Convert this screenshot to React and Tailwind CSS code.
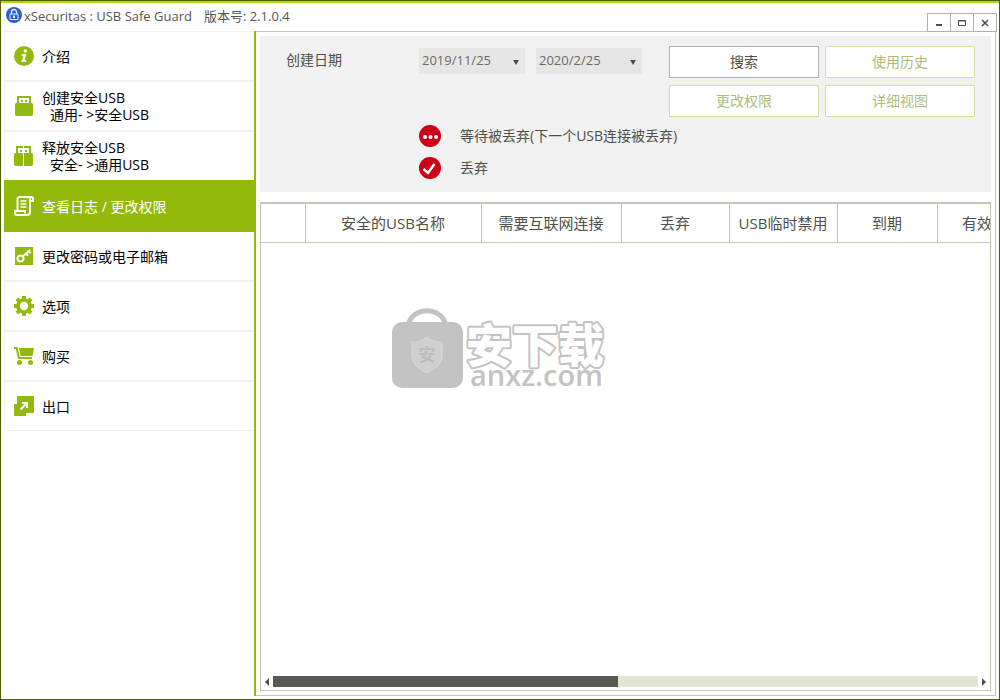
const InfoIcon = () => (
  <svg width="20" height="20" viewBox="0 0 20 20" fill="currentColor">
    <circle cx="10" cy="10" r="10" />
    <circle cx="11.3" cy="5" r="1.7" fill="#fff" />
    <path d="M7.6 8.3h4.6l-1.5 6h1.7l-.3 1.4H7.2l.4-1.4h.7l1.1-4.6H7.3z" fill="#fff" />
  </svg>
);

const UsbIcon = () => (
  <svg width="20" height="20" viewBox="0 0 20 20" fill="currentColor">
    <path d="M3 0h14v9H3z" />
    <path d="M5 2h10v5H5z" fill="#fff" />
    <path d="M7 4h2v2H7zM11 4h2v2h-2z" />
    <path d="M2 7h16l1 1v10a2 2 0 0 1-2 2H3a2 2 0 0 1-2-2V8z" />
  </svg>
);

const ReleaseIcon = () => (
  <svg width="20" height="20" viewBox="0 0 20 20" fill="currentColor">
    <path d="M2 0h15v9H2z" />
    <path d="M4 2h11v5H4zM9 0h1v20H9z" fill="#fff" />
    <path d="M6 4h2v2H6zM11 4h2v2h-2z" />
    <path d="M1 7h8v13H2a2 2 0 0 1-2-2V8zM10 7h8l1 1v10a2 2 0 0 1-2 2h-7z" />
  </svg>
);

const LogIcon = () => (
  <svg width="20" height="20" viewBox="0 0 20 20" fill="none" stroke="currentColor" strokeWidth="2">
    <path d="M3.5 14V3a2 2 0 0 1 2-2H17a2 2 0 0 1 2 2v2h-3.5" />
    <path d="M16 2.5V16a3 3 0 0 1-3 3H3a2 2 0 0 1-2-2v-2h10v2.5" />
    <path d="M6.5 5h6M6.5 8h6M6.5 11h6" strokeWidth="1.5" />
  </svg>
);

const KeyIcon = () => (
  <svg width="20" height="20" viewBox="0 0 20 20">
    <path d="M1 1h18v18H1z" fill="currentColor" />
    <g fill="none" stroke="#fff" strokeWidth="2">
      <circle cx="6.5" cy="12.5" r="3" />
      <path d="M8.6 10.4 16 4M12 7.5l2 2.2M14.5 5l2.2 2.4" />
    </g>
  </svg>
);

const GearIcon = () => (
  <svg width="20" height="20" viewBox="0 0 20 20" fill="none" stroke="currentColor">
    <circle cx="10" cy="10" r="6" strokeWidth="3.6" />
    <path
      d="M10 0v3M10 17v3M0 10h3M17 10h3M2.9 2.9l2.2 2.2M14.9 14.9l2.2 2.2M2.9 17.1l2.2-2.2M14.9 5.1l2.2-2.2"
      strokeWidth="4"
    />
  </svg>
);

const CartIcon = () => (
  <svg width="20" height="20" viewBox="0 0 20 20" fill="currentColor">
    <path d="M0 1h3.5l2.2 10H18v2H4L1.9 3H0z" />
    <path d="M5 2h15l-1.5 8h-12z" />
    <circle cx="5.5" cy="16.5" r="2.5" />
    <circle cx="16.5" cy="16.5" r="2.5" />
  </svg>
);

const ExitIcon = () => (
  <svg width="20" height="20" viewBox="0 0 20 20">
    <path d="M3 0h17v17h-8v3H0V8h3z" fill="currentColor" />
    <path d="M6.5 13.5 12.5 7.5M8 7h5v5" fill="none" stroke="#fff" strokeWidth="2" />
  </svg>
);

const LockLogo = () => (
  <svg width="16" height="16" viewBox="0 0 16 16">
    <circle cx="8" cy="8" r="8" fill="#2a62c4" />
    <path d="M5.5 7V5a2.5 2.5 0 0 1 5 0v2" fill="none" stroke="#dfe9fa" strokeWidth="1.3" />
    <path d="M4 7h8v5.5H4z" fill="#2a62c4" stroke="#dfe9fa" />
    <path d="M7 8.5h2V11H7z" fill="#dfe9fa" />
  </svg>
);

const Watermark = () => (
  <svg width="216" height="84" viewBox="0 0 216 84">
    <path d="M17 18C22-1 50-1 55 18" fill="none" stroke="#c3c3c3" strokeWidth="5" />
    <rect x="1" y="15" width="71" height="66" rx="10" fill="#c3c3c3" />
    <path d="M36 30q8 6 15 5v14q0 10-15 17-15-7-15-17V35q7 1 15-5z" fill="#d0d0ce" stroke="#dadada" />
    <text x="36" y="54" textAnchor="middle" fontSize="17" fontWeight="700" fill="#bdbdbd">
      安
    </text>
    <text
      x="75"
      y="55"
      fontSize="46"
      fontWeight="900"
      fill="#fff"
      stroke="#c3c3c3"
      strokeWidth="4"
      strokeLinejoin="round"
      paintOrder="stroke"
    >
      安下载
    </text>
    <text x="79" y="79" fontSize="29" fontWeight="600" fill="#c3c3c3">
      anxz.com
    </text>
  </svg>
);

const menu = [
  { icon: InfoIcon, title: "介绍" },
  { icon: UsbIcon, title: "创建安全USB", sub: "通用- >安全USB" },
  { icon: ReleaseIcon, title: "释放安全USB", sub: "安全- >通用USB" },
  { icon: LogIcon, title: "查看日志 / 更改权限", active: true },
  { icon: KeyIcon, title: "更改密码或电子邮箱" },
  { icon: GearIcon, title: "选项" },
  { icon: CartIcon, title: "购买" },
  { icon: ExitIcon, title: "出口" },
];

const columns = [
  { name: "", width: "w-11" },
  { name: "安全的USB名称", width: "w-44" },
  { name: "需要互联网连接", width: "w-[140px]" },
  { name: "丢弃", width: "w-[108px]" },
  { name: "USB临时禁用", width: "w-[108px]" },
  { name: "到期", width: "w-[100px]" },
  { name: "有效", width: "w-20" },
];

const WindowButton = ({ label, children }) => (
  <button
    type="button"
    aria-label={label}
    className="flex h-[19px] w-6 items-center justify-center border border-[#b0b0b0] bg-white text-[#4f4f49]"
  >
    <svg width="8" height="8" viewBox="0 0 8 8" fill="none" stroke="currentColor">
      {children}
    </svg>
  </button>
);

const TitleBar = () => (
  <header className="flex h-7 shrink-0 justify-between pl-[5px] pr-0.5">
    <div className="flex items-center gap-0.5 text-[13px] text-[#55554f]">
      <div className="pb-1">
        <LockLogo />
      </div>
      <h1>xSecuritas : USB Safe Guard</h1>
      <span className="ml-2.5">版本号: 2.1.0.4</span>
    </div>
    <div className="relative z-10 mt-[10px] flex -space-x-px">
      <WindowButton label="最小化">
        <path d="M1 6h6" strokeWidth="2" />
      </WindowButton>
      <WindowButton label="最大化">
        <path d="M.5 1.5h7v5h-7zM0 2h8" />
      </WindowButton>
      <WindowButton label="关闭">
        <path d="M1 1l6 6M7 1 1 7" strokeWidth="1.6" />
      </WindowButton>
    </div>
  </header>
);

const MenuItem = ({ icon: Icon, title, sub, active }) => (
  <li
    className={
      active
        ? "-mt-0.5 bg-[#93b90d] text-white"
        : "border-b-2 border-l border-[#f1f1f1] text-black last:border-b"
    }
  >
    <button
      type="button"
      className={`flex w-full items-center gap-2 text-left ${active ? "h-[52px] pl-[10px]" : "h-12 pl-[9px]"}`}
    >
      <span className={active ? "text-white" : "text-[#93b90d]"}>
        <Icon />
      </span>
      <span className="text-sm leading-[17px]">
        {title}
        {sub && <span className="block pl-2">{sub}</span>}
      </span>
    </button>
  </li>
);

const DateSelect = ({ id, label, value }) => (
  <div className="relative">
    <select
      id={id}
      aria-label={label}
      defaultValue={value}
      className="block h-[26px] w-[106px] appearance-none bg-[#e6e6e6] pl-[3px] text-[13px] text-[#6b6b66]"
    >
      <option>{value}</option>
    </select>
    <svg className="pointer-events-none absolute right-1.5 top-3" width="6" height="5" viewBox="0 0 6 5" fill="#4f4f49">
      <path d="M0 0h6L3 5z" />
    </svg>
  </div>
);

const ActionButton = ({ primary, children }) => (
  <button
    type="button"
    className={`h-8 w-[150px] border bg-white text-sm ${
      primary ? "border-[#b0b0b0] text-[#4f4f49]" : "border-[#d5e0a6] text-[#adbd78]"
    }`}
  >
    {children}
  </button>
);

const Legend = () => (
  <ul className="mt-2 space-y-[10px] pl-[133px] text-sm text-[#4f4f49]">
    <li className="flex h-[22px] items-center gap-[19px]">
      <svg width="22" height="22" viewBox="0 0 22 22">
        <circle cx="11" cy="11" r="11" fill="#cd001a" />
        <g fill="#fff">
          <circle cx="6" cy="12" r="2" />
          <circle cx="11.5" cy="12" r="2" />
          <circle cx="17" cy="12" r="2" />
        </g>
      </svg>
      等待被丢弃(下一个USB连接被丢弃)
    </li>
    <li className="flex h-[22px] items-center gap-[19px]">
      <svg width="22" height="22" viewBox="0 0 22 22">
        <circle cx="11" cy="11" r="11" fill="#cd001a" />
        <path d="M4.5 12 9 16l6.5-9" fill="none" stroke="#fff" strokeWidth="2.5" />
      </svg>
      丢弃
    </li>
  </ul>
);

const FilterPanel = () => (
  <section className="shrink-0 bg-[#f1f1f1] pb-[13px] pl-[26px] pr-4 pt-[10px]">
    <div className="flex justify-between">
      <div className="flex pt-0.5">
        <label htmlFor="from" className="w-[133px] pt-0.5 text-sm text-[#4f4f49]">
          创建日期
        </label>
        <div className="flex gap-[11px]">
          <DateSelect id="from" value="2019/11/25" />
          <DateSelect id="to" label="结束日期" value="2020/2/25" />
        </div>
      </div>
      <div className="grid grid-cols-2 gap-x-1.5 gap-y-[7px]">
        <ActionButton primary>搜索</ActionButton>
        <ActionButton>使用历史</ActionButton>
        <ActionButton>更改权限</ActionButton>
        <ActionButton>详细视图</ActionButton>
      </div>
    </div>
    <Legend />
  </section>
);

const ScrollBar = () => (
  <div className="flex h-[11px] shrink-0 items-center px-1 text-[#4f4f49]">
    <button type="button" aria-label="向左" className="w-2">
      <svg width="4" height="8" viewBox="0 0 4 8" fill="currentColor">
        <path d="M4 0v8L0 4z" />
      </svg>
    </button>
    <div className="h-full flex-1 bg-[#e3e6d3]">
      <div className="h-full w-[49%] bg-[#595952]" />
    </div>
    <button type="button" aria-label="向右" className="flex w-2 justify-end">
      <svg width="4" height="8" viewBox="0 0 4 8" fill="currentColor">
        <path d="M0 0v8l4-4z" />
      </svg>
    </button>
  </div>
);

const LogTable = () => (
  <section className="relative mt-[10px] flex min-h-0 flex-1 flex-col border border-t-2 border-[#c3c6b4] pb-[3px]">
    <div className="flex-1 overflow-hidden">
      <table className="w-[756px] table-fixed border-collapse text-[15px] text-[#4f4f49]">
        <thead>
          <tr className="h-[38px] border-b border-[#c3c6b4]">
            {columns.map((col, i) => (
              <th
                key={i}
                scope="col"
                className={`${col.width} whitespace-nowrap border-r border-[#c3c6b4] p-0 font-normal`}
              >
                {col.name}
              </th>
            ))}
          </tr>
        </thead>
      </table>
    </div>
    <div className="pointer-events-none absolute left-[130px] top-[103px]">
      <Watermark />
    </div>
    <ScrollBar />
  </section>
);

export default function App() {
  return (
    <div className="flex h-screen flex-col border border-[#4f6306] bg-white font-['Open_Sans','Noto_Sans_CJK_SC',sans-serif]">
      <div className="h-0.5 shrink-0 bg-[#add80f]" />
      <TitleBar />
      <div className="flex min-h-0 flex-1 px-[3px] pb-[3px]">
        <nav className="w-[252px] shrink-0 border-r-2 border-[#93b90d]">
          <ul className="border-t border-[#f1f1f1]">
            {menu.map((item) => (
              <MenuItem key={item.title} {...item} />
            ))}
          </ul>
        </nav>
        <main className="flex min-w-0 flex-1 flex-col border border-l-0 border-[#c3c6b4] p-1">
          <FilterPanel />
          <LogTable />
        </main>
      </div>
    </div>
  );
}
